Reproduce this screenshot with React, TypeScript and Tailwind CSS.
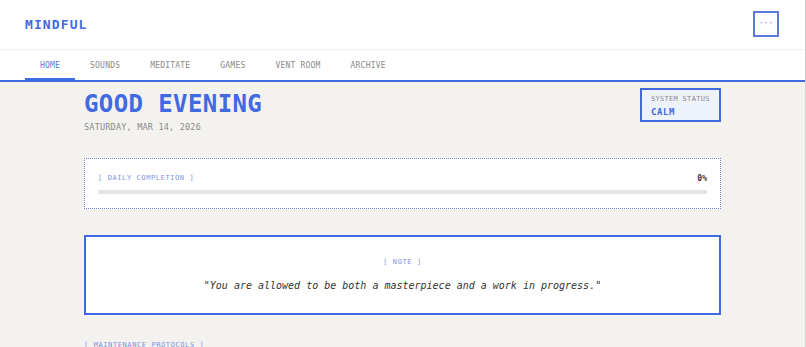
import React from "react";

const mono = { fontFamily: '"DejaVu Sans Mono", "Liberation Mono", monospace' };

export default function App() {
  const tabs = ["HOME", "SOUNDS", "MEDITATE", "GAMES", "VENT ROOM", "ARCHIVE"];
  return (
    <div style={mono} className="w-[806px] h-[347px] overflow-hidden border-r border-[#cfcfcf] bg-[#f3f2ef]">
      <header className="h-[50px] bg-white border-b border-[#f0f0f0] flex items-center justify-between pl-[25px] pr-[26px]">
        <div className="text-[13px] font-bold tracking-[1.1px] text-[#4169e1]">MINDFUL</div>
        <button className="w-[26px] h-[26px] border-2 border-[#5b78dc] flex items-center justify-center text-[8px] text-[#6b84de] leading-none mt-[-2px]">
          ···
        </button>
      </header>
      <nav className="h-[32px] bg-white border-b-2 border-[#4169e1] flex pl-[25px]">
        {tabs.map((t, i) => (
          <div
            key={t}
            className={
              "px-[15px] pt-[4px] flex items-center text-[8px] tracking-[0.2px] " +
              (i === 0 ? "text-[#5b78dc] border-b-2 border-[#4169e1]" : "text-[#8a8a8a] border-b-2 border-transparent")
            }
          >
            {t}
          </div>
        ))}
      </nav>
      <main className="w-[637px] mx-auto pt-[6px]">
        <div className="flex justify-between items-start">
          <div>
            <h1 className="text-[24px] font-bold tracking-[0.4px] text-[#4169e1] leading-[30px] mt-[1px]">GOOD EVENING</h1>
            <div className="text-[8.5px] tracking-[0.2px] text-[#8a8a8a] mt-[2px]">SATURDAY, MAR 14, 2026</div>
          </div>
          <div className="w-[81px] h-[34px] border-2 border-[#4169e1] bg-[#eef2fd] pl-[9px] pt-[5px] flex flex-col">
            <div className="text-[7px] tracking-[0.3px] text-[#8a8a8a] leading-[9px]">SYSTEM STATUS</div>
            <div className="text-[9px] font-bold tracking-[0.6px] text-[#4169e1] leading-[12px] mt-[2px]">CALM</div>
          </div>
        </div>
        <section className="mt-[24px] h-[51px] bg-white border-[1.5px] border-dotted border-[#7088e0] px-[13px] pt-[15px]">
          <div className="flex justify-between items-center">
            <span className="text-[7px] tracking-[0.6px] text-[#7f93e2] leading-[9px]">[ DAILY COMPLETION ]</span>
            <span className="text-[8px] font-bold text-[#333] leading-[9px]">0%</span>
          </div>
          <div className="mt-[7px] h-[4px] bg-[#e4e5e8]"></div>
        </section>
        <section className="mt-[26px] h-[80px] bg-white border-2 border-[#4169e1] flex flex-col items-center pt-[21px]">
          <div className="text-[7px] tracking-[0.6px] text-[#7f93e2] leading-[9px]">[ NOTE ]</div>
          <div className="mt-[13px] text-[10px] italic text-[#333] leading-[12px]">
            "You are allowed to be both a masterpiece and a work in progress."
          </div>
        </section>
        <div className="mt-[26px] text-[7px] tracking-[0.6px] text-[#7f93e2] leading-[9px]">[ MAINTENANCE PROTOCOLS ]</div>
      </main>
    </div>
  );
}
